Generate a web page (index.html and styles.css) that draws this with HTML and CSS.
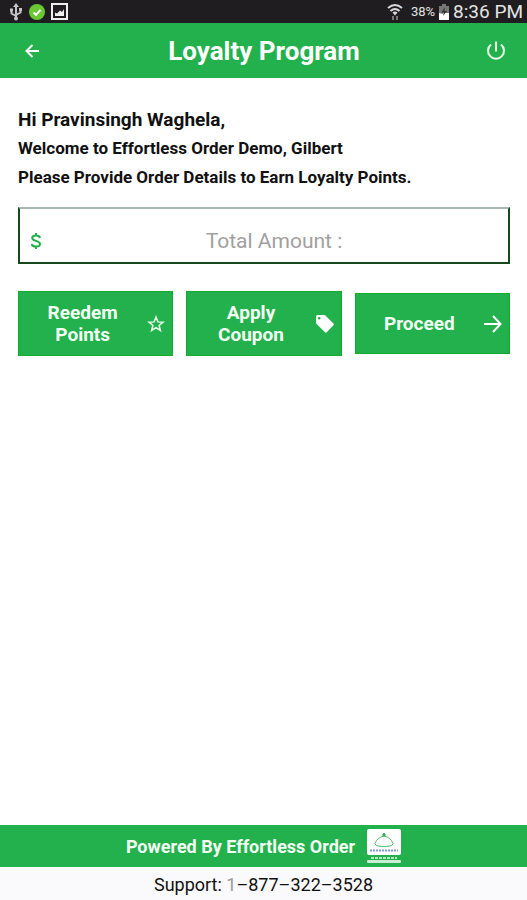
FILE: index.html
```html
<!DOCTYPE html>
<html lang="en">
<head>
<meta charset="utf-8">
<meta name="viewport" content="width=device-width, initial-scale=1">
<title>Loyalty Program</title>
<link rel="stylesheet" href="styles.css">
</head>
<body>
<div class="status">
  <div class="status-group">
    <svg width="14" height="18" viewBox="0 0 14 18" fill="none" stroke="#c4c4c4" stroke-width="2"><path d="M7 3v13M2.500 7v3.500L7 13M11.500 6v3.500L7 12"/><path d="M7 0l3 4H4z" fill="#c4c4c4" stroke="none"/><circle cx="7" cy="15.500" r="2" fill="#c4c4c4" stroke="none"/><path d="M1 5.500h3v3H1zM10 5h3v3h-3z" fill="#c4c4c4" stroke="none"/></svg>
    <svg width="16" height="16" viewBox="0 0 16 16"><circle cx="8" cy="8" r="8" fill="#6cc832"/><path d="M4.500 8.500l2.500 2.300 4.500-5" fill="none" stroke="#fff" stroke-width="2"/></svg>
    <svg width="17" height="17" viewBox="0 0 17 17"><rect x="1" y="1" width="15" height="15" fill="none" stroke="#eee" stroke-width="2"/><path d="M4 13V9.500l2 1 3-3 2 1.500 2-3V13z" fill="#eee"/></svg>
  </div>
  <div class="status-group status-right">
    <svg class="wifi" width="16" height="18" viewBox="0 0 16 18" fill="none" stroke="#d8d8d8" stroke-width="2"><path d="M1 5q7-6 14 0M3.500 8q4.500-4 9 0"/><path d="M5.500 9.500q2.500-2 5 0L8 12.500z" fill="#d8d8d8" stroke="none"/><path d="M6 13v4M10 13v4" stroke="#777"/></svg>
    <span class="percent">38%</span>
    <svg width="10" height="16" viewBox="0 0 10 16"><path d="M3 0h4v2h3v14H0V2h3z" fill="#777"/><path d="M0 9l4 1 2-3 1 2h3v7H0z" fill="#fff"/><path d="M6 3L2.500 8.500H5L4 12l4-5H5.500z" fill="#333"/></svg>
    <time class="clock">8:36 PM</time>
  </div>
</div>
<header class="bar">
  <button class="icon-btn" aria-label="Back"><svg width="14" height="14" viewBox="0 0 14 14" fill="none" stroke="#fff" stroke-width="2"><path d="M14 7H1.500M7.500 1L1.500 7l6 6"/></svg></button>
  <h1>Loyalty Program</h1>
  <button class="icon-btn" aria-label="Log out"><svg width="20" height="20" viewBox="0 0 20 20" fill="none" stroke="#e8ffe8" stroke-width="2"><path d="M10 0.500v10M5 3.500a8 8 0 1 0 10 0"/></svg></button>
</header>
<main>
  <h2>Hi Pravinsingh Waghela,</h2>
  <p class="intro">Welcome to Effortless Order Demo, Gilbert</p>
  <p class="intro">Please Provide Order Details to Earn Loyalty Points.</p>
  <div class="amount">
    <svg width="12" height="18" viewBox="0 0 12 18" fill="none" stroke="#20b04a" stroke-width="2"><path d="M10 6C9.700 4 8.300 3.500 6 3.500S2.200 4.300 2.200 6C2.200 9.800 10 8 10 12c0 1.800-1.800 2.500-4 2.500S2 13.800 1.700 12M6 1v2.500M6 14.500V17"/></svg>
    <input type="text" inputmode="decimal" aria-label="Total Amount" placeholder="Total Amount :">
  </div>
  <div class="actions">
    <button class="action"><span>Reedem Points</span><svg width="18" height="18" viewBox="0 0 18 18" fill="none" stroke="#e8ffe8" stroke-width="1.500"><path d="M9 2l1.900 4.900 5.200.3-4 3.300 1.300 5L9 12.700l-4.400 2.800 1.300-5-4-3.300 5.200-.3z"/></svg></button>
    <button class="action"><span>Apply Coupon</span><svg width="18" height="18" viewBox="0 0 18 18"><path fill="#fff" fill-rule="evenodd" d="M1.500 0H8q.8 0 1.400.6l8 7.800q.9.900 0 1.800l-6.600 7q-.9.900-1.800 0L.6 9Q0 8.400 0 7.500v-6Q0 0 1.500 0zM3.200 2a1.300 1.300 0 1 0 0 2.600 1.300 1.300 0 1 0 0-2.600z"/></svg></button>
    <button class="action"><span>Proceed</span><svg width="18" height="18" viewBox="0 0 18 18" fill="none" stroke="#fff" stroke-width="2"><path d="M0 9h16.500M9 1l7.500 8L9 17"/></svg></button>
  </div>
</main>
<footer>
  <div class="powered">
    <span>Powered By Effortless Order</span>
    <svg width="34" height="35" viewBox="0 0 34 35"><rect width="34" height="26" rx="2" fill="#fff"/><path d="M8 14.500Q10 8.500 17 7q7 1.500 9 7.500 0 2-3 2.500-6 1.200-12 0-3-.5-3-2.500zM15 7h4" fill="none" stroke="#55be70"/><circle cx="17" cy="5.500" r="1.500" fill="#20b04a"/><path d="M3 21.500h28" stroke="#7c9bd8" stroke-width="2" stroke-dasharray="2 1"/><path d="M4 29h26" stroke="#b5e6c2" stroke-width="2" stroke-dasharray="3 1"/><rect y="31" width="34" height="3" rx="1" fill="#c9efd2"/></svg>
  </div>
  <p class="support">Support: <a href="tel:18773223528"><span class="prefix">1</span>–877–322–3528</a></p>
</footer>
</body>
</html>
```
FILE: styles.css
```css
* { box-sizing: border-box; }
body {
  margin: 0;
  min-height: 100vh;
  display: flex;
  flex-direction: column;
  background: #fff;
  color: #111;
  font-family: Roboto, sans-serif;
}
h1, h2, p { margin: 0; }
button { border: 0; font: inherit; color: inherit; cursor: pointer; }
svg { display: block; flex: none; }

.status {
  height: 23px;
  padding: 0 4px 0 9px;
  display: flex;
  align-items: center;
  justify-content: space-between;
  background: #1f1d1f;
  color: #e4e4e4;
}
.status-group { display: flex; align-items: center; gap: 6px; }
.status-right { gap: 4px; }
.wifi { margin-right: 4px; }
.percent { font-size: 13px; }
.clock { font-size: 19px; line-height: 23px; }

.bar {
  height: 55px;
  padding: 0 15px 0 16px;
  display: flex;
  align-items: center;
  justify-content: space-between;
  background: #22b14c;
  color: #fff;
}
.bar h1 { font-size: 26px; line-height: 32px; font-weight: 700; }
.icon-btn {
  width: 32px;
  height: 32px;
  padding: 0;
  display: grid;
  place-items: center;
  background: none;
}

main { flex: 1; padding: 27px 17px 26px 18px; }
h2 { font-size: 19px; line-height: 29px; font-weight: 700; }
.intro { font-size: 17px; line-height: 29px; font-weight: 700; }
.amount {
  height: 57px;
  margin-top: 15px;
  padding: 10px 10px 0;
  display: flex;
  align-items: center;
  border: 2px solid #17491f;
  border-top-color: #a9b8ae;
}
.amount input {
  flex: 1;
  min-width: 0;
  padding: 0 0 0 8px;
  border: 0;
  outline: 0;
  background: none;
  font: 21px/28px Roboto, sans-serif;
  text-align: center;
}
.amount input::placeholder { color: #a0a0a0; opacity: 1; }

.actions {
  margin-top: 27px;
  display: grid;
  grid-template-columns: repeat(3, 1fr);
  gap: 13px;
  align-items: center;
}
.action {
  min-height: 61px;
  padding: 10px 7px 9px;
  display: flex;
  align-items: center;
  background: #22b14c;
  border: 1px solid #12ac2c;
  color: #f4fff4;
  font-size: 19px;
  line-height: 22px;
  font-weight: 700;
}
.action span { flex: 1; padding: 0 24px 0 16px; text-align: center; }

.powered {
  height: 42px;
  display: flex;
  align-items: center;
  justify-content: center;
  gap: 12px;
  background: #22b14c;
  color: #f4fff4;
  font-size: 18px;
  font-weight: 700;
}
.support {
  height: 33px;
  background: #fafafc;
  font-size: 18px;
  line-height: 35px;
  text-align: center;
}
.support a { color: inherit; text-decoration: none; }
.prefix { color: #999; }
```
